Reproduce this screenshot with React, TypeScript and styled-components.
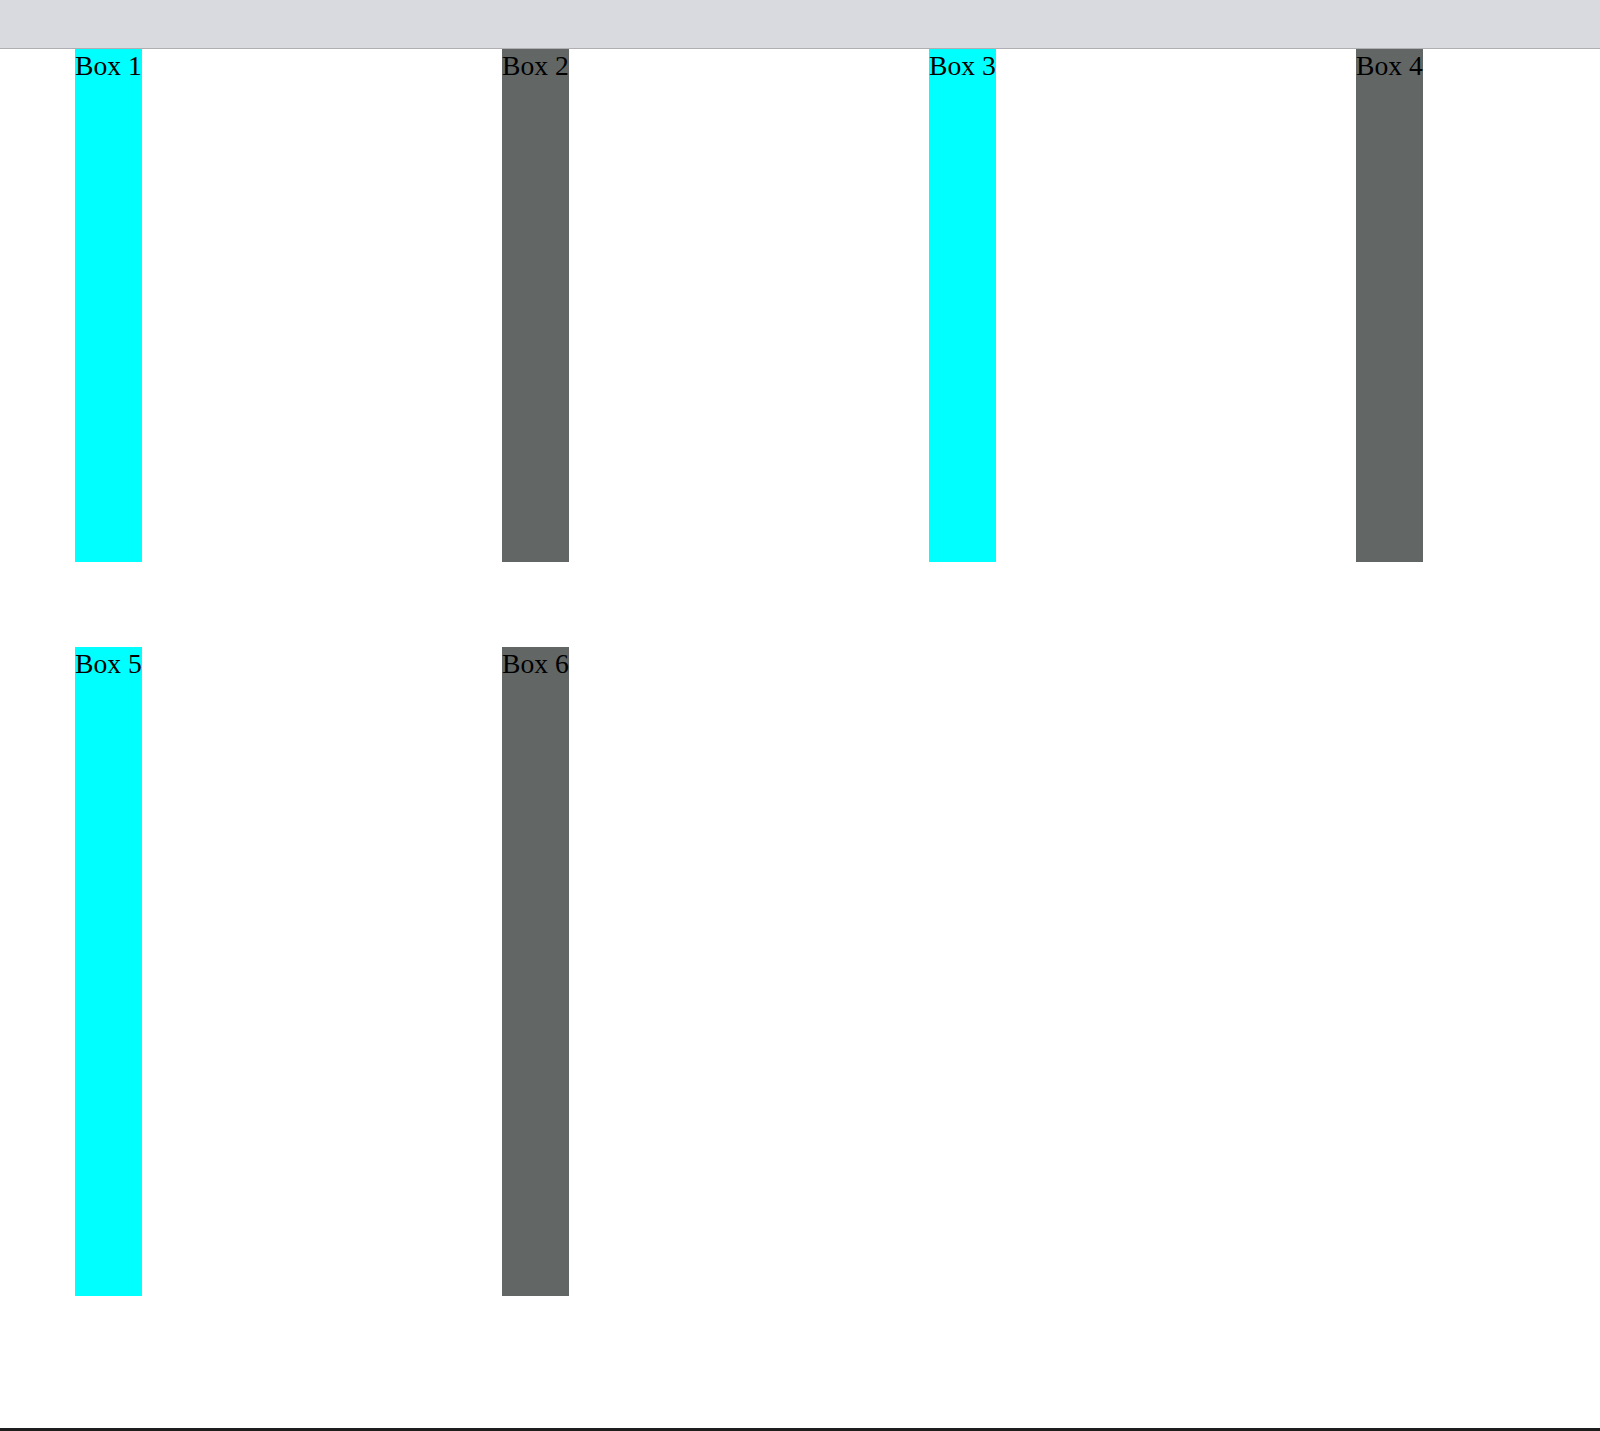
import styled, { createGlobalStyle } from 'styled-components';

const GlobalStyle = createGlobalStyle`
  html, body {
    margin: 0;
    padding: 0;
    background: #ffffff;
  }
  body {
    font-family: "Liberation Serif", "Times New Roman", serif;
  }
`;

const Page = styled.div`
  display: flex;
  flex-direction: column;
  height: 100vh;
  box-sizing: border-box;
  border-bottom: 3px solid #1e1e1e;
  overflow: hidden;
`;

const TopBar = styled.div`
  flex: 0 0 48px;
  background-color: #d9dadf;
  border-bottom: 1px solid #aeaeb3;
`;

const BoxGrid = styled.div`
  display: grid;
  grid-template-columns: repeat(4, max-content);
  grid-template-rows: 512.7px 649px;
  column-gap: 360.3px;
  row-gap: 85px;
  padding-left: 75px;
`;

const Box = styled.div<{ $dark: boolean }>`
  background-color: ${(p) => (p.$dark ? '#626766' : '#00ffff')};
  color: #000000;
  font-size: 27.6px;
  line-height: 1.2;
  white-space: nowrap;
`;

const boxes = [1, 2, 3, 4, 5, 6];

const App = () => {
  return (
    <>
      <GlobalStyle />
      <Page>
        <TopBar />
        <BoxGrid>
          {boxes.map((n) => (
            <Box key={n} $dark={n % 2 === 0}>
              Box {n}
            </Box>
          ))}
        </BoxGrid>
      </Page>
    </>
  );
};

export default App;
